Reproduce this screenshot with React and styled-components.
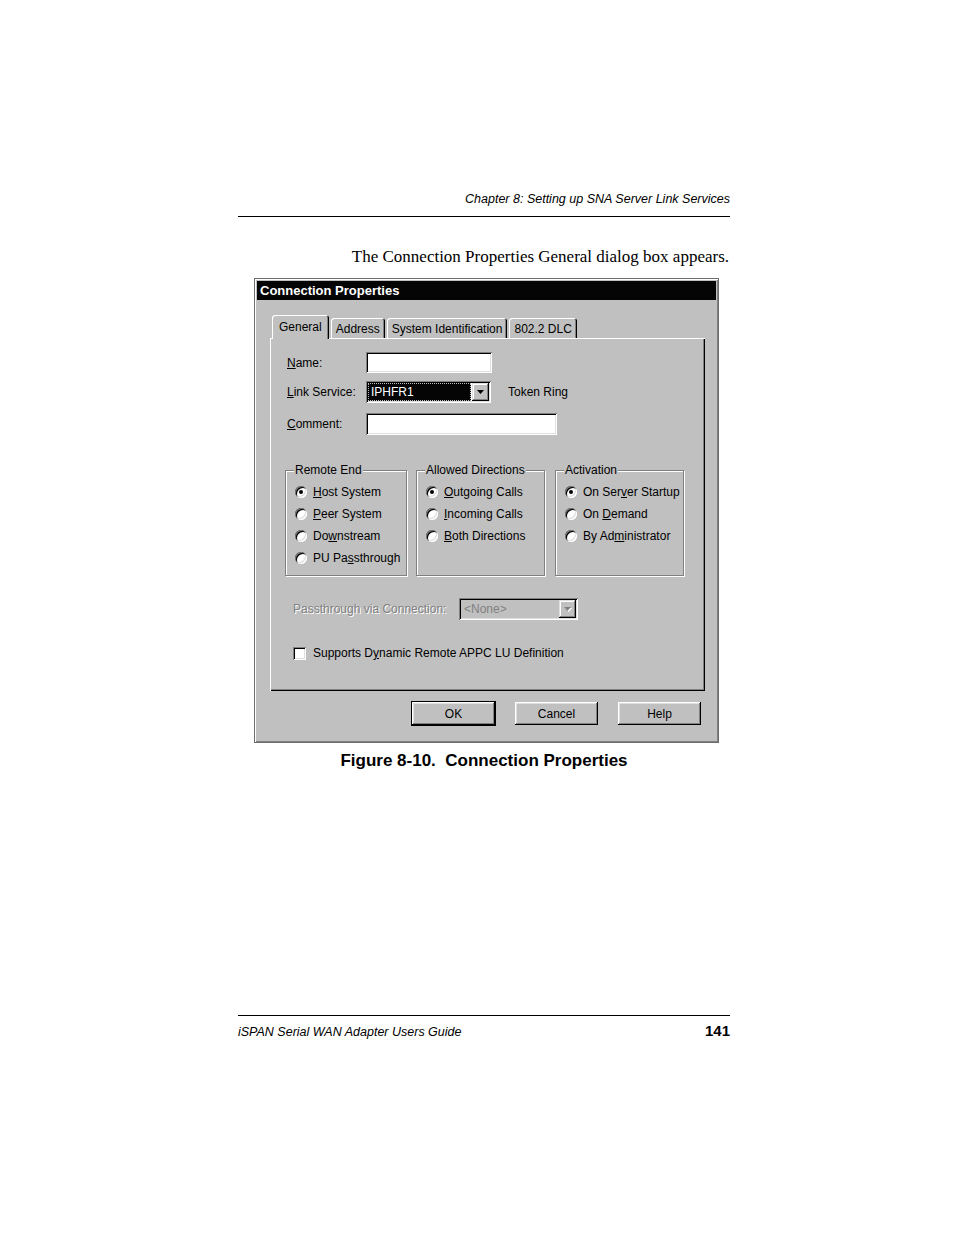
import React from 'react';
import styled, { createGlobalStyle } from 'styled-components';

const GlobalStyle = createGlobalStyle`
  html, body {
    margin: 0;
    padding: 0;
    background: #fff;
  }
  body {
    width: 954px;
    min-height: 1235px;
  }
`;

const Page = styled.div`
  width: 492px;
  margin-left: 238px;
  padding-top: 192px;
  color: #000;
`;

const RunningHead = styled.div`
  font-family: "Liberation Sans", Arial, sans-serif;
  font-style: italic;
  font-size: 12.5px;
  line-height: 14px;
  text-align: right;
  padding-bottom: 10px;
  border-bottom: 1px solid #000;
`;

const Intro = styled.p`
  margin: 30px 0 0;
  padding-right: 1px;
  font-family: "Liberation Serif", "Times New Roman", serif;
  font-size: 17px;
  line-height: 20px;
  text-align: right;
`;

const Dialog = styled.div`
  box-sizing: border-box;
  width: 465px;
  margin: 11px 0 0 16px;
  padding: 3px;
  background: #c0c0c0;
  border: 1px solid #6e6e6e;
  box-shadow: inset 1px 1px 0 #fff, inset -1px -1px 0 #808080;
  font-family: "Liberation Sans", Arial, sans-serif;
  font-size: 12px;
  color: #000;
`;

const TitleBar = styled.div`
  height: 19px;
  margin: -1px -1px 0;
  padding-left: 3px;
  display: flex;
  align-items: center;
  background: #050505;
  color: #fff;
  font-weight: bold;
  font-size: 13px;
`;

const DialogBody = styled.div`
  padding: 15px 10px 13px 12px;
`;

const TabStrip = styled.div`
  height: 23px;
  padding-left: 2px;
  display: flex;
  align-items: flex-end;
  gap: 2px;
`;

const Tab = styled.div`
  position: relative;
  z-index: ${p => (p.$active ? 2 : 1)};
  box-sizing: border-box;
  height: ${p => (p.$active ? '24px' : '20px')};
  margin-bottom: ${p => (p.$active ? '-1px' : '0')};
  padding: ${p => (p.$active ? '0 7px' : '1px 5px 0')};
  display: flex;
  align-items: center;
  background: #c0c0c0;
  border-radius: 3px 3px 0 0;
  box-shadow: inset 1px 1px 0 #fff, inset -1px 0 0 #000, inset -2px 0 0 #808080;
  white-space: nowrap;
`;

const Panel = styled.div`
  box-sizing: border-box;
  height: 353px;
  padding: 14px 15px 0;
  background: #c0c0c0;
  box-shadow: inset 1px 1px 0 #fff, inset -1px -1px 0 #000, inset -2px -2px 0 #808080;
`;

const FormRow = styled.div`
  display: flex;
  align-items: center;
  margin-left: 2px;
  margin-top: ${p => p.$gap || 0}px;
`;

const Label = styled.span`
  width: 79px;
  flex: none;
`;

const Field = styled.div`
  box-sizing: border-box;
  width: ${p => p.$width}px;
  height: ${p => p.$height || 21}px;
  background: ${p => (p.$disabled ? '#c0c0c0' : '#fff')};
  box-shadow: inset 1px 1px 0 #808080, inset -1px -1px 0 #fff, inset 2px 2px 0 #000, inset -2px -2px 0 #dfdfdf;
`;

const Combo = styled(Field)`
  display: flex;
  align-items: stretch;
  padding: 2px;
  gap: 1px;
`;

const ComboValue = styled.div`
  flex: 1;
  display: flex;
  align-items: center;
  padding-left: 2px;
  background: ${p => (p.$selected ? '#050505' : 'transparent')};
  color: ${p => (p.$disabled ? '#808080' : p.$selected ? '#fff' : '#000')};
  border: 1px dotted ${p => (p.$selected ? '#bbb' : 'transparent')};
`;

const ComboButton = styled.div`
  width: 17px;
  flex: none;
  display: flex;
  align-items: center;
  justify-content: center;
  background: #c0c0c0;
  box-shadow: inset -1px -1px 0 #000, inset 1px 1px 0 #dfdfdf, inset -2px -2px 0 #808080, inset 2px 2px 0 #fff;
`;

const SideText = styled.span`
  margin-left: 17px;
`;

const GroupRow = styled.div`
  display: flex;
  margin-top: 35px;
  gap: 9px;
`;

const GroupBox = styled.div`
  box-sizing: border-box;
  width: ${p => p.$width}px;
  margin-left: ${p => p.$shift || 0}px;
  height: 106px;
  padding: 0 6px 0 9px;
  display: flex;
  flex-direction: column;
  border: 1px solid #808080;
  box-shadow: inset 1px 1px 0 #fff, 1px 1px 0 #fff;
`;

const GroupTitle = styled.span`
  align-self: flex-start;
  margin: -8px 0 0 -1px;
  padding: 0 1px;
  line-height: 14px;
  background: #c0c0c0;
  white-space: nowrap;
`;

const RadioList = styled.div`
  margin-top: 4px;
  display: flex;
  flex-direction: column;
`;

const RadioRow = styled.div`
  height: 22px;
  display: flex;
  align-items: center;
  gap: 6px;
  white-space: nowrap;
`;

const RadioDot = styled.span`
  position: relative;
  flex: none;
  width: 12px;
  height: 12px;
  border-radius: 50%;
  background: #fff;
  box-shadow: inset 1px 1px 0 #808080, inset -1px -1px 0 #fff, inset 2px 2px 0 #000, inset -2px -2px 0 #dfdfdf;

  &::after {
    content: '';
    display: ${p => (p.$checked ? 'block' : 'none')};
    position: absolute;
    left: 4px;
    top: 4px;
    width: 4px;
    height: 4px;
    border-radius: 50%;
    background: #000;
  }
`;

const U = styled.span`
  text-decoration: underline;
  text-underline-offset: 1px;
`;

const PassRow = styled.div`
  display: flex;
  align-items: center;
  margin: 22px 0 0 8px;
`;

const DisabledLabel = styled.span`
  width: 166px;
  flex: none;
  color: #808080;
  text-shadow: 1px 1px 0 #fff;
  white-space: nowrap;
`;

const CheckRow = styled.div`
  height: 16px;
  display: flex;
  align-items: center;
  gap: 7px;
  margin: 25px 0 0 8px;
`;

const CheckBox = styled.span`
  width: 13px;
  height: 13px;
  flex: none;
  background: #fff;
  box-shadow: inset 1px 1px 0 #808080, inset -1px -1px 0 #fff, inset 2px 2px 0 #000, inset -2px -2px 0 #dfdfdf;
`;

const ButtonRow = styled.div`
  display: flex;
  justify-content: flex-end;
  gap: 18px;
  margin-top: 10px;
  padding-right: 3px;
`;

const Button = styled.div`
  box-sizing: border-box;
  width: 85px;
  height: 25px;
  display: flex;
  align-items: center;
  justify-content: center;
  background: #c0c0c0;
  border: 1px solid ${p => (p.$default ? '#000' : 'transparent')};
  box-shadow: inset -1px -1px 0 #000, inset 1px 1px 0 #fff, inset -2px -2px 0 #808080, inset 2px 2px 0 #dfdfdf;
`;

const Caption = styled.div`
  margin-top: 8px;
  font-family: "Liberation Sans", Arial, sans-serif;
  font-weight: bold;
  font-size: 17px;
  line-height: 19px;
  text-align: center;
  white-space: pre;
`;

const Footer = styled.div`
  margin-top: 245px;
  padding-top: 6px;
  border-top: 1px solid #000;
  display: flex;
  justify-content: space-between;
  align-items: baseline;
  font-family: "Liberation Sans", Arial, sans-serif;
`;

const FooterTitle = styled.span`
  font-style: italic;
  font-size: 12.5px;
`;

const PageNumber = styled.span`
  font-weight: bold;
  font-size: 15px;
`;

const Arrow = ({ disabled }) => (
  <svg width="8" height="5" viewBox="0 0 8 5">
    {disabled && <polygon points="1,1 8,1 4.5,5" fill="#fff" />}
    <polygon points="0,0 7,0 3.5,4" fill={disabled ? '#808080' : '#000'} />
  </svg>
);

const Radio = ({ checked, children }) => (
  <RadioRow>
    <RadioDot $checked={checked} />
    <span>{children}</span>
  </RadioRow>
);

const tabs = ['General', 'Address', 'System Identification', '802.2 DLC'];

export default function App() {
  return (
    <>
      <GlobalStyle />
      <Page>
        <RunningHead>Chapter 8: Setting up SNA Server Link Services</RunningHead>
        <Intro>The Connection Properties General dialog box appears.</Intro>

        <Dialog>
          <TitleBar>Connection Properties</TitleBar>
          <DialogBody>
            <TabStrip>
              {tabs.map((t, i) => (
                <Tab key={t} $active={i === 0}>{t}</Tab>
              ))}
            </TabStrip>
            <Panel>
              <FormRow>
                <Label><U>N</U>ame:</Label>
                <Field $width={126} />
              </FormRow>
              <FormRow $gap={8}>
                <Label><U>L</U>ink Service:</Label>
                <Combo $width={125} $height={22}>
                  <ComboValue $selected>IPHFR1</ComboValue>
                  <ComboButton><Arrow /></ComboButton>
                </Combo>
                <SideText>Token Ring</SideText>
              </FormRow>
              <FormRow $gap={10}>
                <Label><U>C</U>omment:</Label>
                <Field $width={191} $height={22} />
              </FormRow>

              <GroupRow>
                <GroupBox $width={122}>
                  <GroupTitle>Remote End</GroupTitle>
                  <RadioList>
                    <Radio checked><U>H</U>ost System</Radio>
                    <Radio><U>P</U>eer System</Radio>
                    <Radio>Do<U>w</U>nstream</Radio>
                    <Radio>PU Pa<U>s</U>sthrough</Radio>
                  </RadioList>
                </GroupBox>
                <GroupBox $width={129}>
                  <GroupTitle>Allowed Directions</GroupTitle>
                  <RadioList>
                    <Radio checked><U>O</U>utgoing Calls</Radio>
                    <Radio><U>I</U>ncoming Calls</Radio>
                    <Radio><U>B</U>oth Directions</Radio>
                  </RadioList>
                </GroupBox>
                <GroupBox $width={129} $shift={1}>
                  <GroupTitle>Activation</GroupTitle>
                  <RadioList>
                    <Radio checked>On Ser<U>v</U>er Startup</Radio>
                    <Radio>On <U>D</U>emand</Radio>
                    <Radio>By Ad<U>m</U>inistrator</Radio>
                  </RadioList>
                </GroupBox>
              </GroupRow>

              <PassRow>
                <DisabledLabel>Passthrough via Connection:</DisabledLabel>
                <Combo $width={119} $height={22} $disabled>
                  <ComboValue $disabled>&lt;None&gt;</ComboValue>
                  <ComboButton><Arrow disabled /></ComboButton>
                </Combo>
              </PassRow>

              <CheckRow>
                <CheckBox />
                <span>Supports D<U>y</U>namic Remote APPC LU Definition</span>
              </CheckRow>
            </Panel>

            <ButtonRow>
              <Button $default>OK</Button>
              <Button>Cancel</Button>
              <Button>Help</Button>
            </ButtonRow>
          </DialogBody>
        </Dialog>

        <Caption>{'Figure 8-10.  Connection Properties'}</Caption>

        <Footer>
          <FooterTitle>iSPAN Serial WAN Adapter Users Guide</FooterTitle>
          <PageNumber>141</PageNumber>
        </Footer>
      </Page>
    </>
  );
}
